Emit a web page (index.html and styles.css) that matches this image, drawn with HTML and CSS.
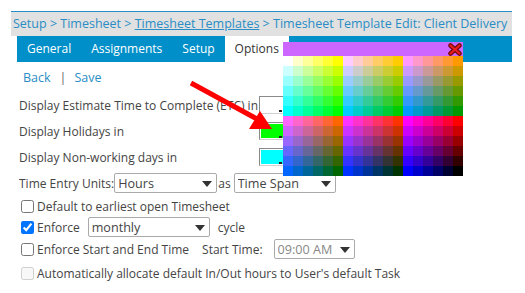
FILE: index.html
```html
<!DOCTYPE html>
<html lang="en">
<head>
    <meta charset="UTF-8">
    <title>Timesheet Template Edit: Client Delivery</title>
    <link rel="stylesheet" href="styles.css">
</head>
<body>
    <div class="page">
        <!-- breadcrumb -->
        <div class="crumbs">
            <a>Setup</a> &gt; <a>Timesheet</a> &gt; <a class="under">Timesheet Templates</a> &gt; <span>Timesheet Template Edit: Client Delivery</span>
        </div>

        <!-- tabs -->
        <div class="tabs">
            <div class="tab">General</div>
            <div class="tab">Assignments</div>
            <div class="tab">Setup</div>
            <div class="tab active">Options</div>
        </div>

        <div class="content">
            <div class="actions"><a>Back</a><span class="sep">|</span><a>Save</a></div>

            <div class="colors">
                <label>Display Estimate Time to Complete (ETC) in</label>
                <span class="swatch"><span class="fill fill-white"></span></span>
                <label>Display Holidays in</label>
                <span class="swatch"><span class="fill fill-green"></span></span>
                <label>Display Non-working days in</label>
                <span class="swatch"><span class="fill fill-cyan"></span></span>
            </div>

            <div class="row units">
                <span>Time Entry Units:</span>
                <span class="select sel-hours"><select><option>Hours</option></select></span>
                <span class="as">as</span>
                <span class="select sel-span"><select><option>Time Span</option></select></span>
            </div>

            <div class="row check first">
                <input type="checkbox"><span>Default to earliest open Timesheet</span>
            </div>
            <div class="row check tall">
                <input type="checkbox" checked><span>Enforce</span>
                <span class="select sel-cycle"><select><option>monthly</option></select></span>
                <span class="cycle">cycle</span>
            </div>
            <div class="row check tall">
                <input type="checkbox"><span>Enforce Start and End Time</span>
                <span class="start-label">Start Time:</span>
                <span class="select sel-time"><select class="muted"><option>09:00 AM</option></select></span>
            </div>
            <div class="row check last">
                <input type="checkbox" disabled><span>Automatically allocate default In/Out hours to User's default Task</span>
            </div>
        </div>
    </div>

    <!-- colour picker popup -->
    <div class="picker">
        <div class="picker-head">
            <svg class="close" width="14" height="13" viewBox="0 0 14 13">
                <path d="M2.5 2.5 L11.5 10.5 M11.5 2.5 L2.5 10.5" stroke="#6e0808" stroke-width="4.5" stroke-linecap="round"/>
                <path d="M2.5 2.5 L11.5 10.5 M11.5 2.5 L2.5 10.5" stroke="#ee1c1c" stroke-width="2.2" stroke-linecap="round"/>
            </svg>
        </div>
        <div id="palette" class="palette"></div>
    </div>

    <!-- annotation arrow -->
    <svg class="arrow" width="525" height="293" viewBox="0 0 525 293">
        <line x1="191" y1="83" x2="257" y2="119" stroke="#ff0000" stroke-width="5"/>
        <polygon points="272,129 260,111 249,129" fill="#ff0000"/>
    </svg>

    <script src="script.js"></script>
</body>
</html>
```

FILE: styles.css
```css
body {
    margin: 0;
    font-family: "Open Sans", "Liberation Sans", sans-serif;
    font-size: 12px;
    color: #444;
    background-color: #fff;
}

.page {
    margin: 11px 13px 0 11px;
}

/* breadcrumb */
.crumbs {
    border-top: 1px solid #2a8dc5;
    background-color: #e1e1e1;
    height: 24px;
    line-height: 24px;
    padding-left: 2px;
    font-size: 12.5px;
    color: #2a8dc5;
    white-space: nowrap;
    overflow: hidden;
}

.crumbs .under {
    text-decoration: underline;
}

/* tabs */
.tabs {
    display: flex;
    margin-left: 6px;
    height: 26px;
    background-color: #008fc9;
}

.tab {
    padding: 0 10px;
    line-height: 26px;
    color: #fff;
}

.tab.active {
    background-color: #fff;
    color: #333;
}

.content {
    padding-left: 8px;
}

.actions {
    margin-top: 7px;
    padding-left: 4px;
    line-height: 18px;
    font-size: 12.5px;
    color: #2a8dc5;
}

.actions .sep {
    color: #666;
    margin: 0 8px 0 9px;
}

/* colour rows */
.colors {
    display: grid;
    grid-template-columns: 240px auto;
    grid-auto-rows: 18px;
    row-gap: 8px;
    align-items: center;
    margin-top: 9px;
}

.colors label {
    white-space: nowrap;
}

.swatch {
    position: relative;
    display: block;
    width: 26px;
    height: 18px;
    box-sizing: border-box;
    border: 1px solid #8a8a8a;
    border-right-color: #d0d0d0;
    border-bottom-color: #d0d0d0;
    padding: 1px;
    background-color: #fff;
}

.swatch::after {
    content: "";
    position: absolute;
    right: 2px;
    bottom: 1px;
    width: 3px;
    height: 2px;
    background-color: #222;
}

.fill {
    display: block;
    height: 100%;
}

.fill-white { background-color: #fff; }
.fill-green { background-color: #00ff00; }
.fill-cyan  { background-color: #00ffff; }

/* form rows */
.row {
    display: flex;
    align-items: center;
    white-space: nowrap;
}

.units {
    margin-top: 7px;
    height: 20px;
}

.units .as {
    margin: 0 3px 0 1px;
}

.check {
    height: 18px;
}

.check.first {
    margin-top: 4px;
}

.check.tall {
    height: 20px;
    margin-top: 2px;
}

.check.last {
    margin-top: 5px;
}

input[type="checkbox"] {
    width: 13px;
    height: 13px;
    margin: 0 3px 0 2px;
}

.select {
    position: relative;
    display: inline-block;
    height: 20px;
}

.select select {
    appearance: none;
    -webkit-appearance: none;
    width: 100%;
    height: 20px;
    box-sizing: border-box;
    border: 1px solid #aaa;
    border-radius: 2px;
    padding: 0 0 0 3px;
    background-color: #fff;
    font-family: inherit;
    font-size: 12.6px;
    color: #444;
}

.select select.muted {
    color: #888;
}

.select::after {
    content: "";
    position: absolute;
    right: 5px;
    top: 8px;
    border-left: 5px solid transparent;
    border-right: 5px solid transparent;
    border-top: 6px solid #333;
    pointer-events: none;
}

.sel-hours { width: 103px; }
.sel-span  { width: 102px; }
.sel-cycle { width: 122px; margin-left: 8px; }
.sel-time  { width: 81px; margin-left: 11px; }

.cycle {
    margin-left: 8px;
}

.start-label {
    margin-left: 13px;
}

/* colour picker */
.picker {
    position: absolute;
    left: 283px;
    top: 42px;
    width: 180px;
}

.picker-head {
    position: relative;
    height: 14px;
    background-color: #cc66ff;
}

.close {
    position: absolute;
    right: 1px;
    top: 1px;
}

.palette {
    display: grid;
    grid-template-columns: repeat(18, 10px);
    grid-auto-rows: 10px;
}

.arrow {
    position: absolute;
    left: 0;
    top: 0;
    pointer-events: none;
}
```

FILE: script.js
```js
// web-safe palette, laid out the way the old picker does it
const shades = ["ff", "cc", "99", "66", "33", "00"];
const palette = document.getElementById("palette");

[["ff", "cc", "99"], ["66", "33", "00"]].forEach(greens => {
    shades.forEach(r => {
        greens.forEach(g => {
            shades.forEach(b => {
                const cell = document.createElement("div");
                cell.style.background = "#" + r + g + b;
                palette.appendChild(cell);
            });
        });
    });
});
```
